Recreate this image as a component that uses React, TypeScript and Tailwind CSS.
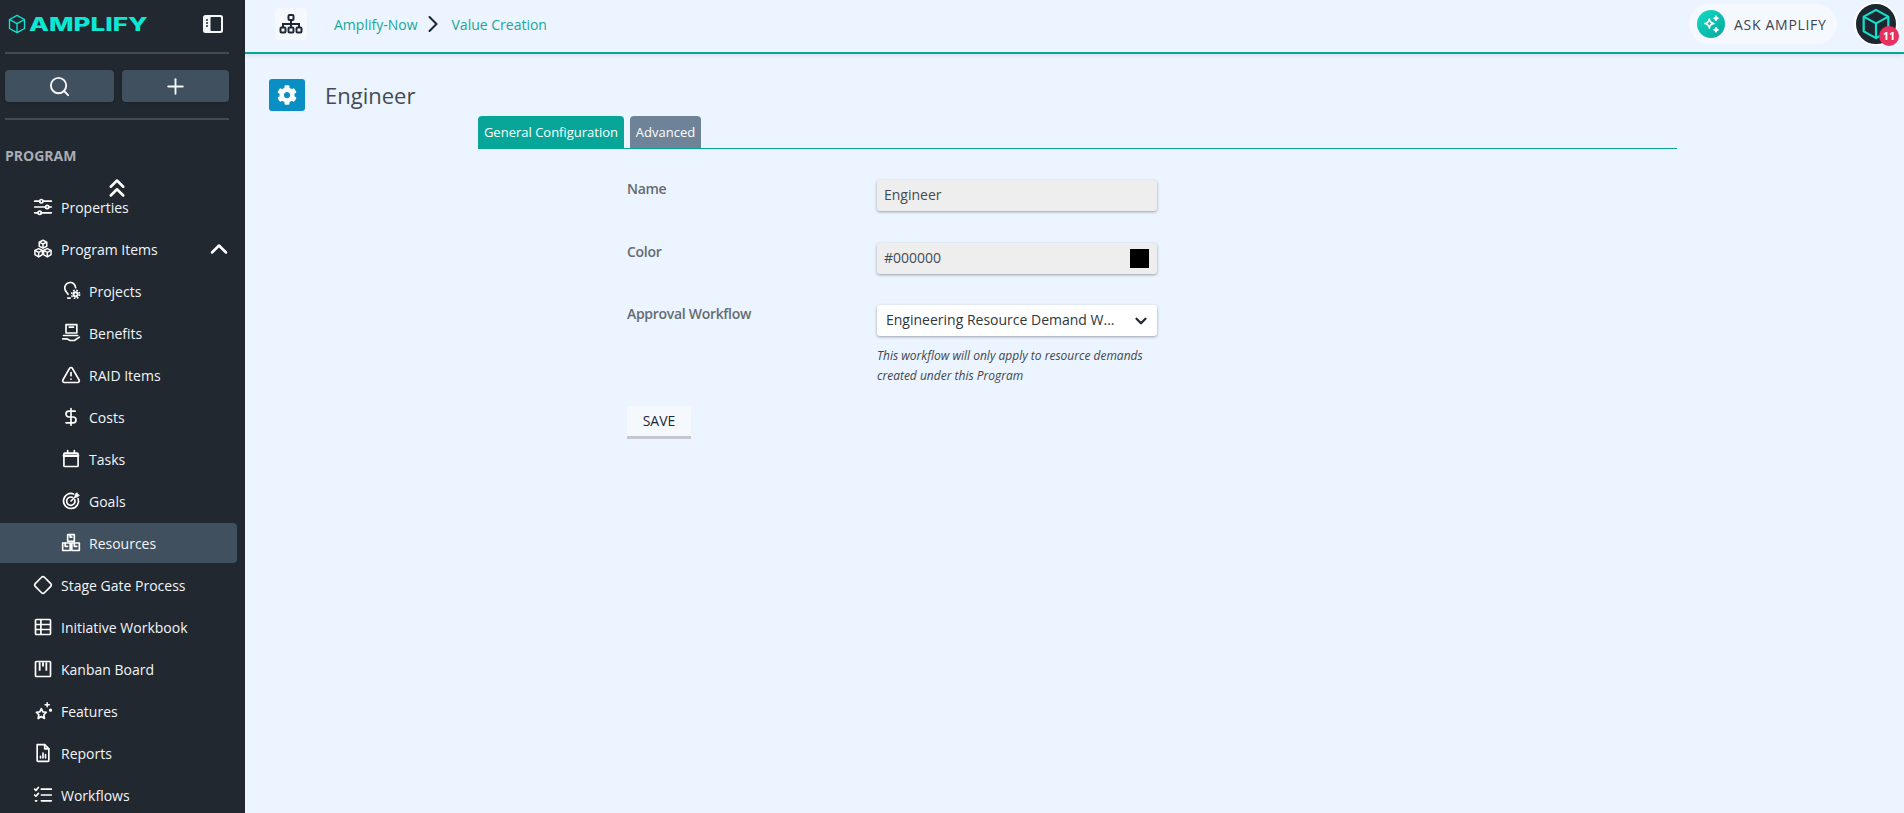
import { ChevronDown, ChevronRight, ChevronUp, ChevronsUp, Diamond, DollarSign, Plus, Search, TriangleAlert } from "lucide-react";
import { FaCog } from "react-icons/fa";
import type { ReactNode } from "react";

type NavItem = {
  label: string;
  icon: ReactNode;
  sub?: boolean;
  active?: boolean;
  open?: boolean;
};

const Svg = ({ children }: { children: ReactNode }) => (
  <svg viewBox="0 0 24 24" className="w-[20px] h-[20px]" fill="none" stroke="currentColor" strokeWidth="2" strokeLinecap="round" strokeLinejoin="round">
    {children}
  </svg>
);

const SlidersIcon = () => (
  <Svg>
    <path d="M2 5h6M12 5h10M2 12h13M19 12h3M2 19h4M10 19h12" />
    <circle cx="10" cy="5" r="2" />
    <circle cx="17" cy="12" r="2" />
    <circle cx="8" cy="19" r="2" />
  </Svg>
);

const CubesIcon = () => (
  <svg viewBox="0 0 24 24" className="w-[20px] h-[20px]" fill="none" stroke="currentColor" strokeWidth="1.800" strokeLinejoin="round">
    <path d="M12 1.500l4.500 2.200v5L12 11 7.500 8.700v-5z" />
    <path d="M7.500 3.700L12 6l4.500-2.300M12 6v5" />
    <path d="M6.800 11.500l4.500 2.200v5l-4.500 2.800-4.500-2.800v-5z" />
    <path d="M2.300 13.700L6.800 16l4.500-2.300M6.800 16v5.500" />
    <path d="M17.200 11.500l4.500 2.200v5l-4.500 2.800-4.500-2.800v-5z" />
    <path d="M12.700 13.700l4.500 2.300 4.500-2.300M17.200 16v5.500" />
  </svg>
);

const ProjectsIcon = () => (
  <Svg>
    <path d="M8.500 16c-1-2-4-3.500-4-7.500a6.500 6.500 0 0 1 13-.5" />
    <path d="M8 20.500h3" />
    <circle cx="17.500" cy="16" r="2.500" strokeWidth="2.400" />
    <circle cx="17.500" cy="16" r="4.800" strokeWidth="2" strokeDasharray="2 1.800" strokeLinecap="butt" />
  </Svg>
);

const BenefitsIcon = () => (
  <Svg>
    <rect x="6" y="2" width="13" height="10" />
    <path d="M3 15h17M2 19h5l4 2h5l6-4" />
    <path d="M10 5h5" />
  </Svg>
);

const CalendarIcon = () => (
  <Svg>
    <rect x="3.500" y="5" width="17" height="16" rx="1" />
    <path d="M3.500 8h17" strokeWidth="3" />
    <path d="M8 2v3M16 2v3" />
  </Svg>
);

const GoalIcon = () => (
  <Svg>
    <path d="M20.500 9a9 9 0 1 1-5.500-5.500" />
    <path d="M16.500 10.500a5 5 0 1 1-3-3" />
    <path d="M12 12l6-6" />
    <path d="M17 7V4l2-2 1 2 2 1-2 2z" fill="currentColor" strokeWidth="1" />
  </Svg>
);

const ResourcesIcon = () => (
  <Svg>
    <rect x="8" y="2" width="8" height="8" />
    <path d="M11 2v3h2" />
    <rect x="2" y="12" width="9" height="9" />
    <rect x="13" y="12" width="9" height="9" />
    <path d="M5 12v4h3M16 12v4h3" />
  </Svg>
);

const TableIcon = () => (
  <Svg>
    <rect x="3" y="3" width="18" height="18" rx="1" />
    <path d="M3 9h18M3 15h18M9.500 3v18" strokeWidth="2" strokeLinecap="butt" />
  </Svg>
);

const KanbanIcon = () => (
  <Svg>
    <rect x="3" y="3" width="18" height="18" rx="1" />
    <path d="M8 4v10M12 4v5M16 4v10" strokeWidth="2.200" strokeLinecap="butt" />
  </Svg>
);

const StarsIcon = () => (
  <Svg>
    <path d="M10 9l1.800 4 4.200.5-3 3 .8 4.500-3.800-2.300L6.200 21l.8-4.500-3-3 4.200-.5z" />
    <path d="M17 2v5M14.500 4.500h5" strokeWidth="1.800" />
    <circle cx="21" cy="11" r="1" />
  </Svg>
);

const ReportIcon = () => (
  <Svg>
    <path d="M5 2h9l5 5v14a1 1 0 0 1-1 1H6a1 1 0 0 1-1-1z" />
    <path d="M14 2v5h5" />
    <path d="M9 18v-2M12 18v-6M15 18v-4" />
  </Svg>
);

const WorkflowsIcon = () => (
  <Svg>
    <path d="M10 5h12M10 12h12M10 19h12" />
    <path d="M2 5l1.500 1.500L6.500 3M2 12l1.500 1.500L6.500 10M3 19h1.500" />
  </Svg>
);

const OrgIcon = () => (
  <svg viewBox="0 0 24 24" className="w-[24px] h-[24px] text-[#1f2933]" fill="none" stroke="currentColor" strokeWidth="2">
    <rect x="9.500" y="3" width="5" height="5" rx="1" />
    <rect x="1.500" y="15.500" width="5" height="5" rx="1" />
    <rect x="9.500" y="15.500" width="5" height="5" rx="1" />
    <rect x="17.500" y="15.500" width="5" height="5" rx="1" />
    <path d="M12 8v7.500M4 15.500V12h16v3.500" />
  </svg>
);

const navItems: NavItem[] = [
  { label: "Properties", icon: <SlidersIcon /> },
  { label: "Program Items", icon: <CubesIcon />, open: true },
  { label: "Projects", icon: <ProjectsIcon />, sub: true },
  { label: "Benefits", icon: <BenefitsIcon />, sub: true },
  { label: "RAID Items", icon: <TriangleAlert size={20} />, sub: true },
  { label: "Costs", icon: <DollarSign size={20} />, sub: true },
  { label: "Tasks", icon: <CalendarIcon />, sub: true },
  { label: "Goals", icon: <GoalIcon />, sub: true },
  { label: "Resources", icon: <ResourcesIcon />, sub: true, active: true },
  { label: "Stage Gate Process", icon: <Diamond size={20} /> },
  { label: "Initiative Workbook", icon: <TableIcon /> },
  { label: "Kanban Board", icon: <KanbanIcon /> },
  { label: "Features", icon: <StarsIcon /> },
  { label: "Reports", icon: <ReportIcon /> },
  { label: "Workflows", icon: <WorkflowsIcon /> },
];

const Logo = () => (
  <div className="flex items-center gap-[3px] text-[#0ce8d6]">
    <svg viewBox="0 0 24 26" className="w-[18px] h-[20px]" fill="none" stroke="currentColor" strokeWidth="1.800" strokeLinejoin="round">
      <path d="M12 1.500l10 5.500v12l-10 5.500-10-5.500V7z" />
      <path d="M2 7l10 5.500L22 7M12 12.500v12" />
    </svg>
    <span className="inline-block w-[118px] whitespace-nowrap text-[19px] leading-none font-extrabold [font-family:'Inter',sans-serif] origin-left scale-x-[1.37]">AMPLIFY</span>
  </div>
);

const Sidebar = () => (
  <aside className="w-[245px] h-[813px] shrink-0 bg-[#212830] overflow-hidden">
    <div className="h-[52px] pb-[4px] flex items-center justify-between pl-[8px] pr-[22px]">
      <Logo />
      <svg viewBox="0 0 20 18" className="w-[20px] h-[18px]">
        <rect width="20" height="18" rx="2.500" fill="#f4f6f8" />
        <rect x="7.500" y="2" width="10.500" height="14" rx="1" fill="#212830" />
        <path d="M3 5h2M3 8h2M3 11h2" stroke="#212830" strokeWidth="1.500" />
      </svg>
    </div>
    <div className="mx-[5px] w-[224px] border-t-2 border-[#3f4c58]" />
    <div className="flex gap-[8px] mx-[5px] w-[224px] mt-[16px]">
      <button className="w-[109px] h-[32px] rounded-[4px] bg-[#41505e] flex items-center justify-center text-[#f4f6f8] shadow">
        <Search size={23} />
      </button>
      <button className="w-[107px] h-[32px] rounded-[4px] bg-[#41505e] flex items-center justify-center text-[#f4f6f8] shadow">
        <Plus size={25} strokeWidth={1.800} />
      </button>
    </div>
    <div className="mx-[5px] w-[224px] border-t-2 border-[#3f4c58] mt-[16px]" />
    <div className="pl-[5px] mt-[26px] h-[20px] leading-[20px] text-[14px] font-bold text-[#a9adb3]">PROGRAM</div>
    <div className="relative h-[20px]">
      <ChevronsUp size={30} strokeWidth={2} className="absolute left-[102px] top-[7px] text-white" />
    </div>
    <nav className="w-[237px]">
      {navItems.map((item) => (
        <div key={item.label} className="h-[42px] flex items-center">
          <div
            className={`h-[40px] w-full flex items-center text-[14px] text-[#f2f5f8] ${item.sub ? "pl-[61px]" : "pl-[33px]"} ${item.active ? "bg-[#41505e] rounded-r-[4px]" : ""}`}
          >
            <span className="w-[28px] flex justify-start text-white">{item.icon}</span>
            <span className="flex-1">{item.label}</span>
            {item.open ? <ChevronUp size={28} strokeWidth={2.200} className="mr-[4px] text-white" /> : null}
          </div>
        </div>
      ))}
    </nav>
  </aside>
);

const TopBar = () => (
  <header className="h-[54px] shrink-0 border-b-2 border-[#07a698] shadow-[0_2px_4px_rgba(0,0,0,0.08)] flex items-center justify-between pb-[4px] pl-[30px] pr-[6px]">
    <div className="flex items-center">
      <div className="w-[32px] h-[32px] rounded-[4px] bg-[#f5f9fe] flex items-center justify-center">
        <OrgIcon />
      </div>
      <span className="ml-[27px] text-[14px] text-[#18a79b]">Amplify-Now</span>
      <ChevronRight size={28} strokeWidth={1.800} className="ml-[1px] mr-[5px] text-[#1f2933]" />
      <span className="text-[14px] text-[#18a79b]">Value Creation</span>
    </div>
    <div className="flex items-center">
      <div className="w-[148px] h-[40px] rounded-full bg-[#f5f9ff] flex items-center pl-[8px]">
        <div className="w-[28px] h-[28px] rounded-full bg-gradient-to-br from-[#12dcc8] to-[#07a698] flex items-center justify-center text-white">
          <svg viewBox="0 0 24 24" className="w-[20px] h-[20px]" fill="none" stroke="currentColor" strokeWidth="1.800" strokeLinejoin="round">
            <path d="M10 6c.6 3.500 2 5 5.500 5.500C12 12 10.600 13.500 10 17c-.6-3.500-2-5-5.500-5.500C8 11 9.400 9.500 10 6z" />
            <path d="M18 2.500c.3 1.700 1 2.400 2.500 2.500-1.500.3-2.200 1-2.500 2.500-.3-1.500-1-2.200-2.500-2.500 1.500-.1 2.200-.8 2.500-2.500z" fill="currentColor" />
            <path d="M18 16.500c.3 1.700 1 2.400 2.500 2.500-1.500.3-2.200 1-2.500 2.500-.3-1.500-1-2.200-2.500-2.500 1.500-.1 2.200-.8 2.500-2.500z" fill="currentColor" />
          </svg>
        </div>
        <span className="ml-[9px] text-[14px] tracking-[0.7px] text-[#3a4450] whitespace-nowrap">ASK AMPLIFY</span>
      </div>
      <div className="relative ml-[17px] w-[44px] h-[44px] rounded-full bg-[#1d2730] border-2 border-white flex items-center justify-center">
        <svg viewBox="0 0 24 26" className="w-[30px] h-[32px] text-[#12e0cc]" fill="none" stroke="currentColor" strokeWidth="1.800" strokeLinejoin="round">
          <path d="M12 1.500l10 5.500v12l-10 5.500-10-5.500V7z" />
          <path d="M2 7l10 5.500L22 7M12 12.500v12" />
        </svg>
        <span className="absolute right-[-3px] bottom-[-2px] w-[20px] h-[20px] rounded-full bg-[#e8305f] text-white text-[11px] font-bold flex items-center justify-center">11</span>
      </div>
    </div>
  </header>
);

const Label = ({ children }: { children: ReactNode }) => (
  <div className="w-[250px] shrink-0 text-[14px] font-semibold tracking-[-0.3px] leading-[18px] text-[#666b70]">{children}</div>
);

const ConfigForm = () => (
  <div className="ml-[149px] mt-[31px] w-[530px] flex flex-col">
    <div className="flex items-start h-[63px]">
      <Label>Name</Label>
      <div className="w-[280px] h-[31px] pb-[2px] rounded-[3px] bg-[#eeeeee] shadow-[0_1px_3px_rgba(0,0,0,0.35)] flex items-center px-[7px] text-[14px] text-[#444b52]">
        Engineer
      </div>
    </div>
    <div className="flex items-start h-[62px]">
      <Label>Color</Label>
      <div className="w-[280px] h-[31px] rounded-[3px] bg-[#eeeeee] shadow-[0_1px_3px_rgba(0,0,0,0.35)] flex items-center justify-between pl-[7px] pr-[8px] text-[14px] text-[#444b52]">
        <span className="mb-[2px]">#000000</span>
        <span className="w-[19px] h-[19px] bg-black" />
      </div>
    </div>
    <div className="flex items-start">
      <Label>Approval Workflow</Label>
      <div className="w-[280px]">
        <div className="h-[31px] rounded-[3px] bg-white shadow-[0_1px_3px_rgba(0,0,0,0.35)] flex items-center justify-between pl-[9px] pr-[7px] text-[14px] text-[#2f363d]">
          <span className="mb-[2px]">Engineering Resource Demand W...</span>
          <ChevronDown size={18} strokeWidth={3} className="text-[#1f2933]" />
        </div>
        <p className="mt-[10px] text-[12px] italic leading-[20px] text-[#3f464d]">
          This workflow will only apply to resource demands created under this Program
        </p>
      </div>
    </div>
    <button className="mt-[20px] pb-[1px] w-[64px] h-[33px] bg-[#f5f9fe] border-b-[3px] border-[#c3c8cf] text-[14px] text-[#1f2933]">SAVE</button>
  </div>
);

export default function App() {
  return (
    <div className="flex w-[1904px] h-[813px] overflow-hidden bg-[#ebf4ff] [font-family:'Open_Sans',sans-serif]">
      <Sidebar />
      <main className="flex-1 flex flex-col min-w-0">
        <TopBar />
        <div className="flex items-center mt-[25px] ml-[24px] h-[32px]">
          <div className="w-[36px] h-[32px] rounded-[3px] bg-[#0a8fc4] flex items-center justify-center text-white">
            <FaCog size={20} />
          </div>
          <h1 className="ml-[20px] text-[22px] text-[#444b52]">Engineer</h1>
        </div>
        <div className="ml-[233px] mt-[5px] w-[1199px]">
          <div className="flex gap-[6px] border-b border-[#07a698] h-[33px]">
            <div className="w-[146px] h-[32px] pt-[1px] rounded-t-[4px] bg-[#07a698] text-white text-[13px] flex items-center justify-center">General Configuration</div>
            <div className="w-[71px] h-[32px] pt-[1px] rounded-t-[4px] bg-[#6f8398] text-white text-[13px] flex items-center justify-center">Advanced</div>
          </div>
          <ConfigForm />
        </div>
      </main>
    </div>
  );
}
